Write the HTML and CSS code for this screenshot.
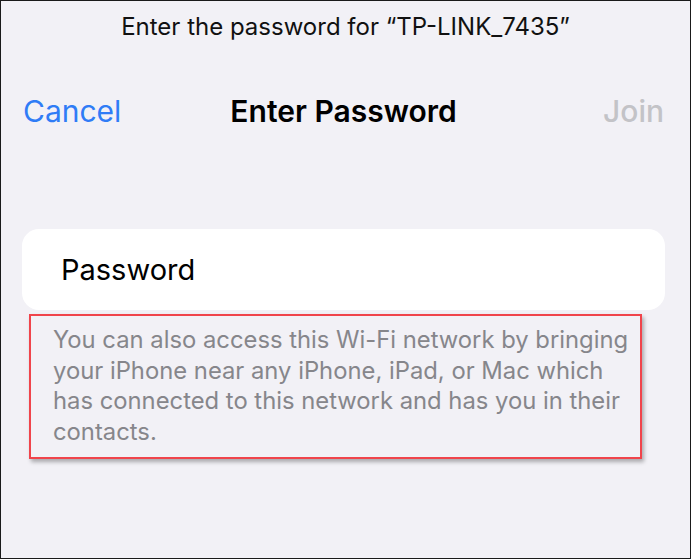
FILE: index.html
```html
<!DOCTYPE html>
<html>
<head>
<meta charset="utf-8">
<link rel="stylesheet" href="styles.css">
</head>
<body>
<div class="screen">
  <div class="prompt">Enter the password for “TP-LINK_7435”</div>
  <div class="nav">
    <span class="cancel">Cancel</span>
    <span class="title">Enter Password</span>
    <span class="join">Join</span>
  </div>
  <div class="card">
    <span class="field">Password</span>
  </div>
  <div class="note">You can also access this Wi-Fi network by bringing your iPhone near any iPhone, iPad, or Mac which has connected to this network and has you in their contacts.</div>
</div>
</body>
</html>
```
FILE: styles.css
```css
html, body {
  margin: 0;
  padding: 0;
}
body {
  width: 691px;
  height: 559px;
  overflow: hidden;
  font-family: "Inter", "Roboto", sans-serif;
}
.screen {
  box-sizing: border-box;
  width: 691px;
  height: 559px;
  background: #f2f1f6;
  border: 1px solid #1a1a1a;
  display: flex;
  flex-direction: column;
}
.prompt {
  text-align: center;
  font-size: 24px;
  color: #111;
  margin-top: 11px;
  line-height: 30px;
}
.nav {
  display: grid;
  grid-template-columns: 1fr auto 1fr;
  align-items: center;
  margin-top: 50px;
  padding: 0 26px 0 22px;
  height: 38px;
  font-size: 30px;
}
.cancel { color: #2f7cf6; justify-self: start; }
.title { font-weight: 600; color: #000; }
.join { color: #c3c3c7; font-weight: 500; justify-self: end; }
.card {
  margin: 99px 25px 0 21px;
  height: 81px;
  background: #fff;
  border-radius: 17px;
  display: flex;
  align-items: center;
  padding-left: 39px;
}
.field {
  font-size: 29px;
  color: #000;
}
.note {
  margin: 4px 48px 0 28px;
  border: 2px solid #f0444b;
  box-shadow: 2px 3px 4px rgba(0,0,0,0.3);
  padding: 9px 2px 10px 22px;
  font-size: 23.8px;
  line-height: 30.5px;
  color: #86868b;
}
```
